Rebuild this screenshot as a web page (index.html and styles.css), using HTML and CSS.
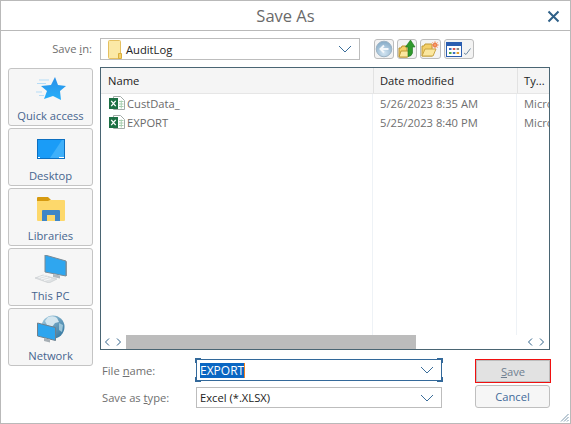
FILE: index.html
```html
<!DOCTYPE html>
<html lang="en">
<head>
<meta charset="utf-8">
<title>Save As</title>
<link rel="stylesheet" href="styles.css">
</head>
<body>
<div class="dialog">
  <header class="titlebar">
    <span class="title">Save As</span>
    <svg class="close" width="13" height="13" viewBox="0 0 13 13"><path d="M1.500 1.500l10 10M11.500 1.500l-10 10" stroke="#2f6088" stroke-width="2" fill="none"/></svg>
  </header>
  <div class="topbar">
    <span class="lbl savein">Save <u>i</u>n:</span>
    <div class="combo locbox">
      <svg width="14" height="19" viewBox="0 0 14 19"><path d="M.5 1.500a1 1 0 0 1 1-1h10a1 1 0 0 1 1 1v17h-11a1 1 0 0 1-1-1z" fill="#fbe9a6" stroke="#e5c060"/><path d="M10.500 18.500v-5h3v5z" fill="#f4d06a" stroke="#d9ae3c"/></svg>
      <span class="loctext">AuditLog</span>
      <svg class="chev" width="14" height="8" viewBox="0 0 14 8"><path d="M1 1l6 6 6-6" stroke="#3a6d9a" fill="none"/></svg>
    </div>
    <div class="tools">
      <button class="tool w20">
        <svg width="18" height="18" viewBox="0 0 18 18"><defs><radialGradient id="g1" cx=".5" cy=".75" r=".8"><stop offset="0" stop-color="#d4e6f3"/><stop offset="1" stop-color="#7ea5c3"/></radialGradient></defs><circle cx="9" cy="9" r="7.800" fill="url(#g1)" stroke="#9db3c4"/><path d="M13.500 9H6M9 5.500L5.500 9 9 12.500" stroke="#f4f8fb" stroke-width="2" fill="none"/></svg>
      </button>
      <button class="tool w20">
        <svg width="18" height="18" viewBox="0 0 18 18"><path d="M1 17V8h2l1-2h5v11z" fill="#f4cf68" stroke="#b8902e"/><path d="M1 17l2-6h9l-2 6z" fill="#fbe79f" stroke="#c09a35"/><path d="M10 16.500V7H7.500L12.500 0 17 7h-2.500v6q-1 3.500-4.500 3.500z" fill="#2f9a2c" stroke="#1f7420" stroke-width=".6"/></svg>
      </button>
      <button class="tool w21">
        <svg width="19" height="16" viewBox="0 0 19 16"><path d="M1 15V5h2l1-2h7v12z" fill="#f4cf68" stroke="#c09a35"/><path d="M1 15l3-7h11l-3 7z" fill="#fbe79f" stroke="#c9a544"/><circle cx="14" cy="4" r="2.500" fill="#ef6b35"/><path d="M14 0v8M10 4h8M11.200 1.200l5.600 5.600M16.800 1.200l-5.600 5.600" stroke="#f0a070" stroke-width=".8"/></svg>
      </button>
      <button class="tool w30">
        <svg width="26" height="15" viewBox="0 0 26 15"><rect x=".5" y=".5" width="15" height="14" fill="#fff" stroke="#2a5db0"/><rect x="1" y="1" width="14" height="3" fill="#2a5db0"/><path d="M3 6h2.500v2H3z" fill="#3b6fc4"/><path d="M6.800 6h2.500v2H6.800z" fill="#d9534f"/><path d="M10.600 6h2.500v2h-2.500z" fill="#888"/><path d="M3 10h2.500v2H3z" fill="#4aa54a"/><path d="M6.800 10h2.500v2H6.800z" fill="#3b6fc4"/><path d="M10.600 10h2.500v2h-2.500z" fill="#e0a030"/><path d="M18 11l2 1.500 4.500-6" stroke="#6f8ba3" fill="none"/></svg>
      </button>
    </div>
  </div>
  <div class="middle">
    <nav class="places">
      <a class="place">
        <svg width="30" height="24" viewBox="0 0 30 24"><defs><linearGradient id="g2" x1="0" y1="0" x2="0" y2="1"><stop offset="0" stop-color="#2a8fe8"/><stop offset="1" stop-color="#27b0fa"/></linearGradient></defs><path d="M3 3h10M1 6.500h9M0 15h6M3 18.500h5" stroke="#b5dcf7"/><path d="M19 0l3 8 8 1-6 5 1 9-8-4-9 3 3-8-6-5 10-1z" fill="url(#g2)"/></svg>
        <span>Quick access</span>
      </a>
      <a class="place">
        <svg width="28" height="20" viewBox="0 0 28 20"><rect x=".5" y=".5" width="27" height="19" fill="#1a9cf7" stroke="#0d6fc0"/><path d="M13 19L25 1h2v18z" fill="#3fb0fa"/><path d="M1 18.500h2M22 18.500h5" stroke="#fff"/></svg>
        <span>Desktop</span>
      </a>
      <a class="place">
        <svg width="28" height="24" viewBox="0 0 28 24"><path d="M0 1a1 1 0 0 1 1-1h10l3 3v3H0z" fill="#d69a10"/><path d="M0 4h11l2-1h14a1 1 0 0 1 1 1v19a1 1 0 0 1-1 1H1a1 1 0 0 1-1-1z" fill="#fdd86b"/><path d="M5 24V14a1 1 0 0 1 1-1h16a1 1 0 0 1 1 1v10h-5v-6h-8v6z" fill="#3f86c6"/></svg>
        <span>Libraries</span>
      </a>
      <a class="place">
        <svg width="32" height="28" viewBox="0 0 32 28"><path d="M10 0l21 6v15l-21-4z" fill="#2fa6ef" stroke="#7b8a94"/><path d="M31 6l1 1v14l-1 0z" fill="#8a97a0"/><path d="M18 19l7 1.500v3l-7-1.500z" fill="#b0b8be"/><path d="M0 23l8-3 14 4-8 4z" fill="#dfe2e4" stroke="#bcc0c4" stroke-width=".5"/><path d="M3.500 22.500l7-2M6 24l7-2M9 25.500l7-2" stroke="#fff" stroke-width=".7"/></svg>
        <span>This PC</span>
      </a>
      <a class="place">
        <svg width="28" height="28" viewBox="0 0 28 28"><defs><linearGradient id="g3" x1="0" y1="0" x2="1" y2="1"><stop offset="0" stop-color="#a9cfe2"/><stop offset="1" stop-color="#2a6f9a"/></linearGradient></defs><circle cx="16" cy="12" r="11.500" fill="url(#g3)"/><path d="M11 2q6-2 9 1l2 4-4 1-3 4-5-2-2-4z" fill="#d4e6ef"/><path d="M22 8l4 2-1 7-3-2z" fill="#9cc6da"/><path d="M.5 8l18 4.500v13L.5 21z" fill="#2da5ee" stroke="#70808c"/><path d="M7 23l6 1.500v3L7 26z" fill="#a7afb5"/></svg>
        <span>Network</span>
      </a>
    </nav>
    <section class="list">
      <div class="listhead">
        <div class="col c1">Name</div>
        <div class="col c2">Date modified</div>
        <div class="col c3">Ty...</div>
      </div>
      <div class="rows">
        <div class="row">
          <div class="cell c1 namecell">
            <svg width="16" height="14" viewBox="0 0 16 14"><path d="M4.500.5h7l4 4v9h-11z" fill="#fff" stroke="#a3aca8"/><path d="M10 5.500h4.500M10 8h4.500M10 10.500h4.500M12.250 4.500v8" stroke="#a8cfb0"/><rect x="0" y="2" width="9" height="11" fill="#1d7044"/><path d="M2.200 4.800l4.500 5.400M6.700 4.800l-4.500 5.400" stroke="#fff" stroke-width="1.300"/></svg>
            <span>CustData_</span>
          </div>
          <div class="cell c2">5/26/2023 8:35 AM</div>
          <div class="cell c3">Micro</div>
        </div>
        <div class="row">
          <div class="cell c1 namecell">
            <svg width="16" height="14" viewBox="0 0 16 14"><path d="M4.500.5h7l4 4v9h-11z" fill="#fff" stroke="#a3aca8"/><path d="M10 5.500h4.500M10 8h4.500M10 10.500h4.500M12.250 4.500v8" stroke="#a8cfb0"/><rect x="0" y="2" width="9" height="11" fill="#1d7044"/><path d="M2.200 4.800l4.500 5.400M6.700 4.800l-4.500 5.400" stroke="#fff" stroke-width="1.300"/></svg>
            <span>EXPORT</span>
          </div>
          <div class="cell c2">5/25/2023 8:40 PM</div>
          <div class="cell c3">Micro</div>
        </div>
      </div>
      <div class="hscroll">
        <span class="arrows"><svg width="6" height="8" viewBox="0 0 6 8"><path d="M5 .5L1.500 4 5 7.500" stroke="#2f6088" fill="none"/></svg><svg width="6" height="8" viewBox="0 0 6 8"><path d="M1 .5L4.500 4 1 7.500" stroke="#2f6088" fill="none"/></svg></span>
        <div class="track"><div class="thumb"></div></div>
        <span class="arrows"><svg width="6" height="8" viewBox="0 0 6 8"><path d="M5 .5L1.500 4 5 7.500" stroke="#2f6088" fill="none"/></svg><svg width="6" height="8" viewBox="0 0 6 8"><path d="M1 .5L4.500 4 1 7.500" stroke="#2f6088" fill="none"/></svg></span>
      </div>
    </section>
  </div>
  <div class="bottom">
    <div class="form">
      <div class="formrow r1">
        <span class="lbl">File <u>n</u>ame:</span>
        <div class="combo focused">
          <i class="corner tl"></i><i class="corner bl"></i><i class="corner tr"></i><i class="corner br"></i>
          <span class="sel">EXPORT</span>
          <svg class="chev" width="14" height="8" viewBox="0 0 14 8"><path d="M1 1l6 6 6-6" stroke="#3a6d9a" fill="none"/></svg>
        </div>
      </div>
      <div class="formrow r2">
        <span class="lbl">Save as <u>t</u>ype:</span>
        <div class="combo typebox">
          <span class="typetext">Excel (*.XLSX)</span>
          <svg class="chev" width="14" height="8" viewBox="0 0 14 8"><path d="M1 1l6 6 6-6" stroke="#3a6d9a" fill="none"/></svg>
        </div>
      </div>
    </div>
    <div class="actions">
      <button class="btn save"><u>S</u>ave</button>
      <button class="btn cancel">Cancel</button>
    </div>
  </div>
  <svg class="grip" width="9" height="9" viewBox="0 0 9 9"><path d="M8.500 1L1 8.500M8.500 4L4 8.500M8.500 7L7 8.500" stroke="#7d98ad"/></svg>
</div>
</body>
</html>
```

FILE: styles.css
```css
* { box-sizing: border-box; }
html, body { margin: 0; padding: 0; }
body { width: 571px; height: 424px; background: #fff; font-family: "Open Sans", "Noto Sans", sans-serif; font-size: 11.2px; overflow: hidden; }
.dialog { position: relative; width: 571px; height: 424px; border: 1px solid #b9b9b9; display: flex; flex-direction: column; background: #fff; }
.titlebar { height: 30px; border-bottom: 1px solid #b9b9b9; display: flex; align-items: center; justify-content: center; flex: none; }
.title { font-size: 16.500px; color: #6a6a6a; }
.close { position: absolute; right: 10px; top: 9px; }
.topbar { display: flex; align-items: center; height: 22px; margin-top: 7px; flex: none; }
.lbl { color: #6f6f6f; }
.savein { width: 91px; text-align: right; position: relative; top: -1px; }
.combo { position: relative; display: flex; align-items: center; border: 1px solid #bdbdbd; background: #fff; }
.chev { position: absolute; right: 7px; top: 50%; margin-top: -4px; }
.locbox { width: 260px; height: 22px; margin-left: 8px; padding-left: 7px; gap: 4px; }
.loctext { color: #222; }
.tools { display: flex; gap: 3px; margin-left: 14px; }
.tool { height: 20px; padding: 0; background: #f3f3f3; border: 1px solid #bdbdbd; border-radius: 3px; display: flex; align-items: center; justify-content: center; overflow: hidden; }
.w20 { width: 20px; }
.w21 { width: 21px; }
.w30 { width: 30px; }
.middle { display: flex; align-items: flex-start; height: 283px; margin-top: 7px; padding-left: 7px; flex: none; }
.places { width: 85px; display: flex; flex-direction: column; gap: 2px; margin-top: 1px; }
.place { height: 58px; border: 1px solid #c4c4c4; border-radius: 3px; background: #f6f6f6; display: grid; grid-template-rows: 40px 1fr; justify-items: center; align-items: center; color: #46658f; padding-bottom: 4px; line-height: 13px; }
.list { width: 450px; height: 283px; margin-left: 7px; border: 1px solid #4a6573; display: flex; flex-direction: column; background: #fff; }
.listhead { height: 26px; display: flex; background: #f5f5f5; border-bottom: 1px solid #e6e6e6; flex: none; color: #222; }
.col { display: flex; align-items: center; border-right: 1px solid #e2e2e2; padding-left: 6px; }
.col.c1 { padding-left: 7px; }
.c1 { width: 273px; }
.c2 { width: 144px; }
.c3 { width: 31px; overflow: hidden; border-right: 0; white-space: nowrap; }
.rows { flex: 1; background: linear-gradient(#eef2f6, #eef2f6) 271px 0 / 1px 100% no-repeat, linear-gradient(#eef2f6, #eef2f6) 415px 0 / 1px 100% no-repeat; }
.row { display: flex; height: 18px; margin-bottom: 1px; color: #6f6f6f; }
.cell { display: flex; align-items: center; padding-left: 6px; white-space: nowrap; overflow: hidden; }
.namecell { padding-left: 8px; gap: 2px; color: #6a6a6a; }
.hscroll { height: 14px; display: flex; align-items: center; flex: none; }
.arrows { width: 25px; display: flex; gap: 6px; padding-left: 3px; flex: none; }
.track { flex: 1; height: 14px; background: #fff; }
.thumb { width: 290px; height: 100%; background: #bcbcbc; }
.bottom { display: flex; margin-top: 9px; flex: none; }
.form { width: 441px; padding-left: 101px; }
.formrow { display: flex; align-items: center; }
.formrow .lbl { width: 94px; flex: none; }
.r1 { height: 22px; }
.r2 { height: 21px; margin-top: 6px; }
.focused { width: 246px; height: 22px; border: 1px solid #33699a; padding-left: 3px; }
.corner { position: absolute; width: 6px; height: 5px; border: 0 solid #33699a; }
.tl { left: -2px; top: -2px; border-width: 2px 0 0 2px; }
.bl { left: -2px; bottom: -2px; border-width: 0 0 2px 2px; }
.tr { right: -2px; top: -2px; border-width: 2px 2px 0 0; }
.br { right: -2px; bottom: -2px; border-width: 0 2px 2px 0; }
.sel { background: #0a66c2; color: #fff; font-size: 12px; line-height: 15px; border-right: 1px solid #f08020; }
.typebox { width: 246px; height: 21px; padding-left: 3px; }
.typetext { color: #222; }
.actions { display: flex; flex-direction: column; margin-left: 33px; width: 76px; }
.btn { font: inherit; padding: 0; border-radius: 3px; color: #3f6a9a; height: 23px; width: 75px; background: #f6f6f6; border: 1px solid #bfbfbf; }
.save { height: 24px; width: 76px; background: #e2e2e2; border: 1px solid #f01010; border-radius: 0; color: #6f7f90; box-shadow: inset 0 0 0 1px #bdbdbd; }
.cancel { margin-top: 2px; }
.grip { position: absolute; right: 1px; bottom: 1px; }
```
